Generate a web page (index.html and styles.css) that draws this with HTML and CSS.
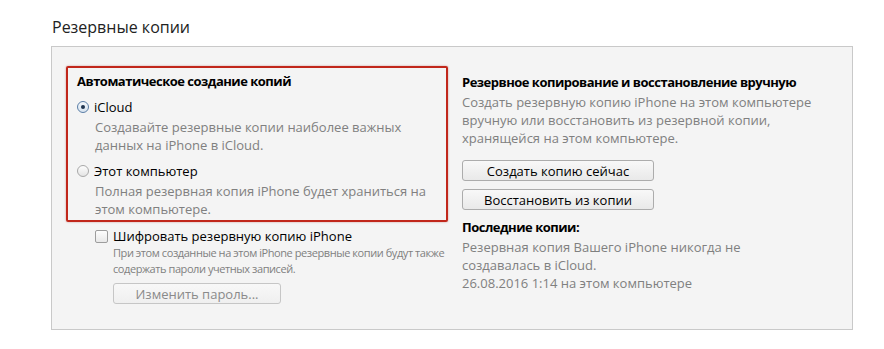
FILE: index.html
```html
<!DOCTYPE html>
<html lang="ru">
  <head>
    <meta charset="UTF-8" />
    <meta name="viewport" content="width=device-width, initial-scale=1.0" />
    <title>Резервные копии</title>
    <link rel="stylesheet" href="styles.css">
  </head>
  <body>
    <h1 class="title">Резервные копии</h1>

    <div class="panel">
      <div class="col-left">
        <div class="auto-box">
          <h3>Автоматическое создание копий</h3>

          <label class="option">
            <span class="radio checked"></span>
            <span>iCloud</span>
          </label>
          <p class="desc">
            Создавайте резервные копии наиболее важных<br />данных на iPhone в iCloud.
          </p>

          <label class="option">
            <span class="radio"></span>
            <span>Этот компьютер</span>
          </label>
          <p class="desc">
            Полная резервная копия iPhone будет храниться на<br />этом компьютере.
          </p>
        </div>

        <div class="encrypt">
          <label class="option">
            <span class="checkbox"></span>
            <span>Шифровать резервную копию iPhone</span>
          </label>
          <p class="note">
            При этом созданные на этом iPhone резервные копии будут также<br />содержать пароли учетных записей.
          </p>
          <button class="btn btn-wide" disabled>Изменить пароль...</button>
        </div>
      </div>

      <div class="col-right">
        <h3>Резервное копирование и восстановление вручную</h3>
        <p class="gray">
          Создать резервную копию iPhone на этом компьютере<br />вручную или восстановить из резервной копии,<br />хранящейся на этом компьютере.
        </p>
        <div class="buttons">
          <button class="btn">Создать копию сейчас</button>
          <button class="btn">Восстановить из копии</button>
        </div>
        <h3>Последние копии:</h3>
        <p class="gray">
          Резервная копия Вашего iPhone никогда не<br />создавалась в iCloud.<br />26.08.2016 1:14 на этом компьютере
        </p>
      </div>
    </div>
  </body>
</html>
```

FILE: styles.css
```css
* {
  margin: 0;
  padding: 0;
  box-sizing: border-box;
}

body {
  font-family: "Open Sans", sans-serif;
  font-size: 13px;
  line-height: 18px;
  color: #111;
  background: #fff;
}

.title {
  font-size: 16px;
  font-weight: normal;
  line-height: 22px;
  color: #222;
  padding: 16px 0 0 52px;
  height: 46px;
}

.panel {
  margin-left: 51px;
  width: 802px;
  height: 284px;
  border: 1px solid #c9c9c9;
  background: #f4f4f4;
  display: flex;
}

h3 {
  font-size: 13px;
  font-weight: bold;
  letter-spacing: -0.5px;
  color: #000;
}

.col-left {
  width: 396px;
  padding: 19px 0 0 14px;
}

.auto-box {
  width: 382px;
  height: 156px;
  border: 2px solid #c1271b;
  border-radius: 2px;
  box-shadow: 0 0 2px rgba(150, 20, 10, 0.45);
  padding: 4px 0 0 9px;
}

.option {
  display: flex;
  align-items: center;
  gap: 5px;
  margin-top: 8px;
  color: #000;
}

.radio {
  width: 12px;
  height: 12px;
  border-radius: 50%;
  border: 1px solid #a8a8a8;
  background: linear-gradient(#fdfdfd, #e4e4e4);
  position: relative;
}

.radio.checked {
  border-color: #5b7ea6;
  background: linear-gradient(#f4f8fc, #d7e3ef);
}

.radio.checked::after {
  content: "";
  position: absolute;
  left: 3px;
  top: 3px;
  width: 4px;
  height: 4px;
  border-radius: 50%;
  background: #1f3550;
}

.desc {
  color: #808080;
  padding-left: 18px;
  margin-top: 2px;
}

.encrypt {
  padding: 5px 0 0 29px;
}

.checkbox {
  width: 13px;
  height: 13px;
  border: 1px solid #9d9d9d;
  border-radius: 2px;
  background: linear-gradient(#fdfdfd, #e8e8e8);
}

.encrypt .option {
  margin-top: 0;
  gap: 5px;
}

.note {
  font-size: 11px;
  line-height: 16px;
  letter-spacing: -0.43px;
  white-space: nowrap;
  color: #808080;
  padding-left: 18px;
  margin-top: 0;
}

.btn {
  font-family: "Open Sans", sans-serif;
  font-size: 13px;
  width: 192px;
  height: 21px;
  border: 1px solid #acacac;
  border-radius: 3px;
  background: linear-gradient(#f8f8f8, #e9e9e9);
  color: #000;
}

.btn-wide {
  width: 168px;
  margin: 6px 0 0 18px;
  color: #8a8a8a;
  border-color: #c6c6c6;
  background: linear-gradient(#f8f8f8, #efefef);
}

.col-right {
  padding: 26px 0 0 14px;
}

.col-right .gray {
  color: #808080;
  margin-top: 2px;
}

.buttons {
  display: flex;
  flex-direction: column;
  gap: 8px;
  margin: 13px 0 8px;
}
```
